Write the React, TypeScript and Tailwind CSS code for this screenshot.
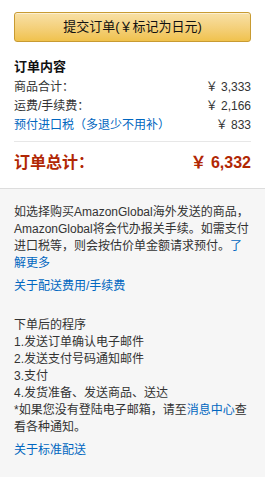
const font = "font-['Liberation_Sans','Noto_Sans_CJK_SC',sans-serif]";

export default function App() {
  return (
    <div className={`${font} w-[265px] h-[477px] bg-white text-[#333] text-[12px] flex flex-col`}>
      <div className="px-[14px] pt-[12px] pb-[13px]">
        <button className="w-full h-[30px] rounded-[3px] border border-[#c89b32] bg-gradient-to-b from-[#f8e0a6] to-[#f0c24c] text-[#111] text-[13px] leading-[28px] text-center shadow-[inset_0_1px_0_rgba(255,255,255,0.5)]">
          提交订单(￥标记为日元)
        </button>

        <div className="mt-[15px] font-bold text-[13px] leading-[19px] text-[#111]">订单内容</div>
        <div className="mt-[2px] leading-[19px]">
          <div className="flex justify-between">
            <span>商品合计：</span>
            <span>￥ 3,333</span>
          </div>
          <div className="flex justify-between">
            <span>运费/手续费：</span>
            <span>￥ 2,166</span>
          </div>
          <div className="flex justify-between">
            <span className="text-[#0066c0]">预付进口税（多退少不用补）</span>
            <span>￥ 833</span>
          </div>
        </div>
        <div className="mt-[6px] border-t border-[#e7e7e7]" />
        <div className="mt-[9px] flex justify-between font-bold text-[16px] leading-[24px] text-[#b12704]">
          <span>订单总计：</span>
          <span>￥ 6,332</span>
        </div>
      </div>

      <div className="flex-1 bg-[#f6f6f6] border-t border-[#dddddd] px-[14px] pt-[15px] leading-[17px]">
        <p>
          如选择购买AmazonGlobal海外发送的商品，AmazonGlobal将会代办报关手续。如需支付进口税等，则会按估价单金额请求预付。
          <span className="text-[#0066c0]">了解更多</span>
        </p>
        <div className="mt-[6px] text-[#0066c0]">关于配送费用/手续费</div>

        <div className="mt-[22px]">
          <div>下单后的程序</div>
          <div>1.发送订单确认电子邮件</div>
          <div>2.发送支付号码通知邮件</div>
          <div>3.支付</div>
          <div>4.发货准备、发送商品、送达</div>
          <div>
            *如果您没有登陆电子邮箱，请至<span className="text-[#0066c0]">消息中心</span>查看各种通知。
          </div>
        </div>
        <div className="mt-[6px] text-[#0066c0]">关于标准配送</div>
      </div>
    </div>
  );
}
